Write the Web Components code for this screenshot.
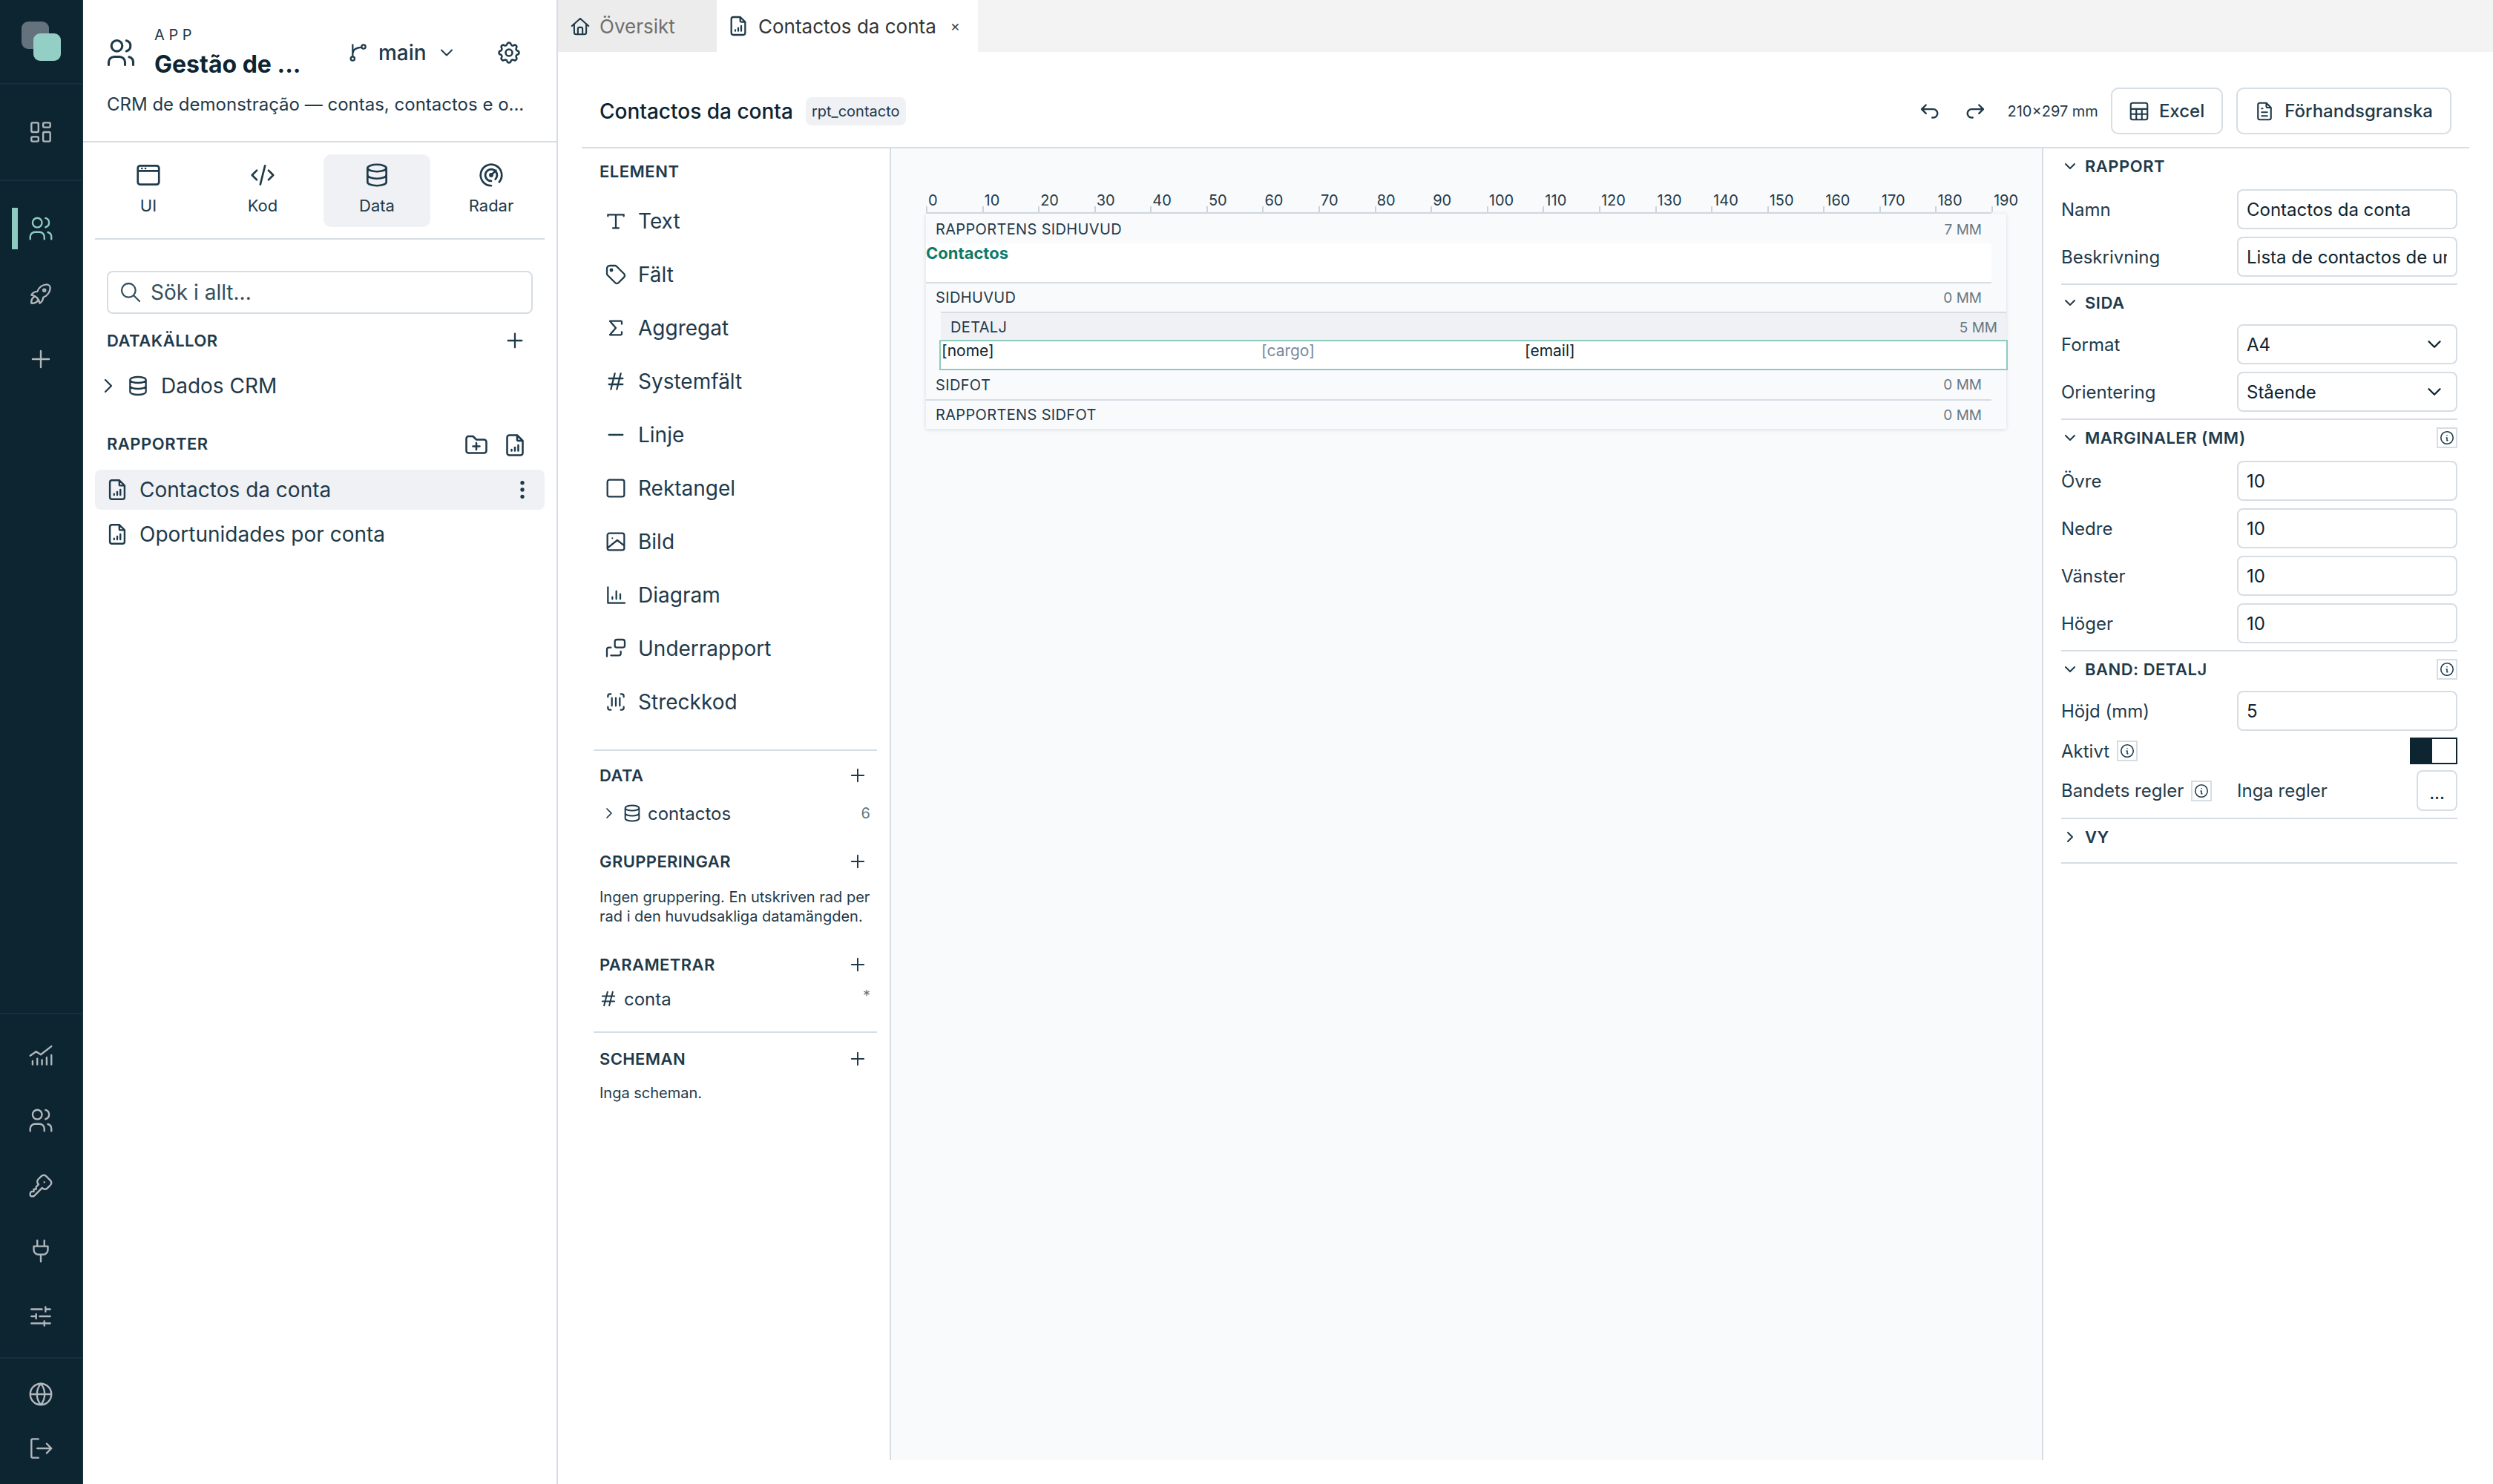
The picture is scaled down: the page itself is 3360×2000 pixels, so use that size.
<!DOCTYPE html>
<html lang="sv">
<head>
<meta charset="utf-8">
<title>Contactos da conta</title>
<style>
  html, body { margin: 0; height: 100%; background: #fff; }
  body { font-family: Inter, "Noto Sans", sans-serif; color: #1f3a4a; overflow: hidden; }
</style>
</head>
<body>
<app-shell>
  <app-rail slot="rail"></app-rail>
  <app-sidebar slot="sidebar"></app-sidebar>
  <report-tabs slot="tabs"></report-tabs>
  <report-toolbar slot="toolbar"></report-toolbar>
  <element-panel slot="elements"></element-panel>
  <report-canvas slot="canvas"></report-canvas>
  <props-panel slot="props"></props-panel>
</app-shell>

<script>
const ICONS = {
  dashboard: "M5 4h4a1 1 0 0 1 1 1v6a1 1 0 0 1-1 1H5a1 1 0 0 1-1-1V5a1 1 0 0 1 1-1M5 16h4a1 1 0 0 1 1 1v2a1 1 0 0 1-1 1H5a1 1 0 0 1-1-1v-2a1 1 0 0 1 1-1M15 12h4a1 1 0 0 1 1 1v6a1 1 0 0 1-1 1h-4a1 1 0 0 1-1-1v-6a1 1 0 0 1 1-1M15 4h4a1 1 0 0 1 1 1v2a1 1 0 0 1-1 1h-4a1 1 0 0 1-1-1V5a1 1 0 0 1 1-1",
  users: "M5 7a4 4 0 1 0 8 0a4 4 0 1 0-8 0M3 21v-2a4 4 0 0 1 4-4h4a4 4 0 0 1 4 4v2M16 3.13a4 4 0 0 1 0 7.75M21 21v-2a4 4 0 0 0-3-3.85",
  rocket: "M4 13a8 8 0 0 1 7 7a6 6 0 0 0 3-5a9 9 0 0 0 6-8a3 3 0 0 0-3-3a9 9 0 0 0-8 6a6 6 0 0 0-5 3M7 14a6 6 0 0 0-3 6a6 6 0 0 0 6-3M14 9a1 1 0 1 0 2 0a1 1 0 1 0-2 0",
  plus: "M12 5v14M5 12h14",
  chart: "M3 12.5l5-3.5 4 2.5 9-7M5 20v-3M9 20v-5M13 20v-4M17 20v-6M21 20v-8",
  key: "M16.555 3.843l3.602 3.602a2.877 2.877 0 0 1 0 4.069l-2.643 2.643a2.877 2.877 0 0 1-4.069 0l-.301-.301l-6.558 6.558a2 2 0 0 1-1.239.578l-.175.008h-1.172a1 1 0 0 1-.993-.883l-.007-.117v-1.172a2 2 0 0 1 .467-1.284l.119-.13l.414-.414h2v-2h2v-2l2.144-2.144l-.301-.301a2.877 2.877 0 0 1 0-4.069l2.643-2.643a2.877 2.877 0 0 1 4.069 0zM15 9h.01",
  plug: "M9 3v5M15 3v5M6 8h12v3a4 4 0 0 1-4 4h-4a4 4 0 0 1-4-4zM12 15v6",
  sliders: "M4 6h9M16 4v4M16 6h4M4 12h4M8 10v4M11 12h9M4 18h11M15 16v4M15 18h5",
  globe: "M3 12a9 9 0 1 0 18 0a9 9 0 0 0-18 0M3 12h18M12 3a14 14 0 0 1 0 18a14 14 0 0 1 0-18",
  logout: "M10 4H5a1 1 0 0 0-1 1v14a1 1 0 0 0 1 1h5M9 12h12M17 8l4 4-4 4",
  branch: "M5 18a2 2 0 1 0 4 0a2 2 0 1 0-4 0M16 6a2 2 0 1 0 4 0a2 2 0 1 0-4 0M7 16V4M16 6.5c-5 .5-9 2.5-9 6.5",
  gear: "M10.325 4.317c.426-1.756 2.924-1.756 3.35 0a1.724 1.724 0 0 0 2.573 1.066c1.543-.94 3.31.826 2.37 2.37a1.724 1.724 0 0 0 1.065 2.572c1.756.426 1.756 2.924 0 3.35a1.724 1.724 0 0 0-1.066 2.573c.94 1.543-.826 3.31-2.37 2.37a1.724 1.724 0 0 0-2.572 1.065c-.426 1.756-2.924 1.756-3.35 0a1.724 1.724 0 0 0-2.573-1.066c-1.543.94-3.31-.826-2.37-2.37a1.724 1.724 0 0 0-1.065-2.572c-1.756-.426-1.756-2.924 0-3.35a1.724 1.724 0 0 0 1.066-2.573c-.94-1.543.826-3.31 2.37-2.37c1 .608 2.296.07 2.572-1.065zM9 12a3 3 0 1 0 6 0a3 3 0 0 0-6 0",
  browser: "M3 6a2 2 0 0 1 2-2h14a2 2 0 0 1 2 2v12a2 2 0 0 1-2 2H5a2 2 0 0 1-2-2zM3 8.5h18M6.5 6.3h.01M9.5 6.3h.01",
  code: "M7 8l-4 4 4 4M17 8l4 4-4 4M14 4l-4 16",
  db: "M4 6a8 3 0 1 0 16 0a8 3 0 1 0-16 0M4 6v6a8 3 0 0 0 16 0V6M4 12v6a8 3 0 0 0 16 0v-6",
  radar: "M11 12a1 1 0 1 0 2 0a1 1 0 1 0-2 0M15.51 15.56a5 5 0 1 0-3.51 1.44M18.832 17.86a9 9 0 1 0-6.832 3.14M12 12l4-4",
  search: "M3 10a7 7 0 1 0 14 0a7 7 0 1 0-14 0M21 21l-6-6",
  right: "M9 6l6 6-6 6",
  down: "M6 9l6 6 6-6",
  folderplus: "M5 4h4l3 3h7a2 2 0 0 1 2 2v8a2 2 0 0 1-2 2H5a2 2 0 0 1-2-2V6a2 2 0 0 1 2-2M12 10v6M9 13h6",
  report: "M14 3v4a1 1 0 0 0 1 1h4M17 21H7a2 2 0 0 1-2-2V5a2 2 0 0 1 2-2h7l5 5v11a2 2 0 0 1-2 2zM9 17v-1M12 17v-3M15 17v-5",
  dots: "M11 5a1 1 0 1 0 2 0a1 1 0 1 0-2 0M11 12a1 1 0 1 0 2 0a1 1 0 1 0-2 0M11 19a1 1 0 1 0 2 0a1 1 0 1 0-2 0",
  home: "M3 12l9-8 9 8M5.5 10v9a2 2 0 0 0 2 2h9a2 2 0 0 0 2-2v-9M9.5 21v-6a1.5 1.5 0 0 1 1.5-1.5h2a1.5 1.5 0 0 1 1.5 1.5v6",
  undo: "M9 14l-4-4 4-4M5 10h11a4 4 0 1 1 0 8h-1",
  redo: "M15 14l4-4-4-4M19 10H8a4 4 0 1 0 0 8h1",
  table: "M3 5a2 2 0 0 1 2-2h14a2 2 0 0 1 2 2v14a2 2 0 0 1-2 2H5a2 2 0 0 1-2-2zM3 9.5h18M3 15h18M9 9.5V21M15 9.5V21",
  filetext: "M14 3v4a1 1 0 0 0 1 1h4M17 21H7a2 2 0 0 1-2-2V5a2 2 0 0 1 2-2h7l5 5v11a2 2 0 0 1-2 2zM9 9h1M9 13h6M9 17h6",
  info: "M3 12a9 9 0 1 0 18 0a9 9 0 0 0-18 0M12 8.5h.01M11 12h1v4h1",
  type: "M4 7V5.5h16V7M12 5.5V19M9 19h6",
  tag: "M6.5 7.5a1 1 0 1 0 2 0a1 1 0 1 0-2 0M3 6v5.172a2 2 0 0 0 .586 1.414l7.71 7.71a2.41 2.41 0 0 0 3.408 0l5.592-5.592a2.41 2.41 0 0 0 0-3.408l-7.71-7.71a2 2 0 0 0-1.414-.586H6a3 3 0 0 0-3 3z",
  sigma: "M18 16v2a1 1 0 0 1-1 1H6l6-7-6-7h11a1 1 0 0 1 1 1v2",
  hash: "M5 9h14M5 15h14M11 4L7 20M17 4l-4 16",
  minus: "M5 12h14",
  square: "M3.5 5.5a2 2 0 0 1 2-2h13a2 2 0 0 1 2 2v13a2 2 0 0 1-2 2h-13a2 2 0 0 1-2-2z",
  photo: "M3.5 5.5a2 2 0 0 1 2-2h13a2 2 0 0 1 2 2v13a2 2 0 0 1-2 2h-13a2 2 0 0 1-2-2zM8.5 8.5h.01M3.5 18.5l10-8 7 5.5",
  bars: "M4 4v16h17M8.5 16v-2M12.5 16V8M16.5 16v-5",
  subreport: "M11 5a2 2 0 0 1 2-2h6a2 2 0 0 1 2 2v4a2 2 0 0 1-2 2h-6a2 2 0 0 1-2-2zM3 20v-7a2 2 0 0 1 2-2h2M7 19h8a2 2 0 0 0 2-2v-2",
  barcode: "M4 7V6a2 2 0 0 1 2-2h1M4 17v1a2 2 0 0 0 2 2h1M17 4h1a2 2 0 0 1 2 2v1M17 20h1a2 2 0 0 0 2-2v-1M8 8v8M12 8v8M16 8v8"
};

// small base: every element renders its css + markup once into an open shadow root
class Base extends HTMLElement {
  connectedCallback() {
    if (this.shadowRoot) return;
    this.attachShadow({ mode: "open" }).innerHTML =
      `<style>*{box-sizing:border-box}${this.constructor.css}</style>${this.markup()}`;
  }
  attr(name, fallback = "") {
    return this.hasAttribute(name) ? this.getAttribute(name) : fallback;
  }
}

class UiIcon extends Base {
  static css = `:host{display:inline-flex;flex:none}svg{display:block;fill:none;stroke:currentColor;stroke-linecap:round;stroke-linejoin:round}`;
  markup() {
    const s = this.attr("size", "32");
    return `<svg width="${s}" height="${s}" viewBox="0 0 24 24" stroke-width="${this.attr("sw", "1.7")}"><path d="${ICONS[this.attr("name")]}"/></svg>`;
  }
}

class AppShell extends Base {
  static css = `
    :host{display:grid;width:3360px;height:2000px;grid-template-columns:112px 640px 449px 1553px 606px;grid-template-rows:70px 130px 1768px 32px}
    .rail{grid-column:1;grid-row:1/5;display:flex}
    .side{grid-column:2;grid-row:1/5;display:flex}
    .tabs{grid-column:3/6;grid-row:1;display:flex}
    .tool{grid-column:3/6;grid-row:2;display:flex}
    .el{grid-column:3;grid-row:3;display:flex}
    .cv{grid-column:4;grid-row:3;display:flex}
    .pr{grid-column:5;grid-row:3;display:flex}
    ::slotted(*){flex:1;min-width:0}
  `;
  markup() {
    return `<div class="rail"><slot name="rail"></slot></div><div class="side"><slot name="sidebar"></slot></div>
      <div class="tabs"><slot name="tabs"></slot></div><div class="tool"><slot name="toolbar"></slot></div>
      <div class="el"><slot name="elements"></slot></div><div class="cv"><slot name="canvas"></slot></div><div class="pr"><slot name="props"></slot></div>`;
  }
}

class RailButton extends Base {
  static css = `
    :host{display:flex;align-items:center;justify-content:center;height:var(--h,88px);position:relative;color:rgba(255,255,255,.68)}
    :host([active]){color:#8ecabf}
    :host([active])::before{content:"";position:absolute;left:16px;top:16px;width:8px;height:56px;background:#8ecabf}
  `;
  markup() { return `<ui-icon name="${this.attr("icon")}" size="38" sw="1.5"></ui-icon>`; }
}

class AppRail extends Base {
  static css = `
    :host{display:flex;flex-direction:column;background:#0d2431;border-right:2px solid #14303f;height:2000px}
    .logo{height:114px;border-bottom:2px solid #17303e;padding:29px 0 0 29px;flex:none}
    .logo div{position:relative;width:53px;height:54px}
    .logo i{position:absolute;width:37px;height:37px;border-radius:9px}
    .logo .a{left:0;top:0;background:#63727c}
    .logo .b{left:16px;top:16px;background:#94cfc5}
    .top{height:130px;border-bottom:2px solid #17303e;display:flex;align-items:center;justify-content:center;flex:none}
    .top rail-button{width:100%}
    .mid{padding-top:20px;flex:1}
    .low{border-top:2px solid #17303e;padding:11px 0;flex:none}
    .end{border-top:2px solid #17303e;padding:11px 0 12px;flex:none;--h:73px}
  `;
  markup() {
    return `<div class="logo"><div><i class="a"></i><i class="b"></i></div></div>
      <div class="top"><rail-button icon="dashboard"></rail-button></div>
      <div class="mid"><rail-button icon="users" active></rail-button><rail-button icon="rocket"></rail-button><rail-button icon="plus"></rail-button></div>
      <div class="low"><rail-button icon="chart"></rail-button><rail-button icon="users"></rail-button><rail-button icon="key"></rail-button><rail-button icon="plug"></rail-button><rail-button icon="sliders"></rail-button></div>
      <div class="end"><rail-button icon="globe"></rail-button><rail-button icon="logout"></rail-button></div>`;
  }
}

class SideTab extends Base {
  static css = `
    :host{display:flex;flex-direction:column;align-items:center;width:144px;height:98px;padding-top:9px;border-radius:10px;font-size:22px;color:#1f3a4a}
    :host([active]){background:#eff1f5}
    span{display:block;line-height:30px;margin-top:7px}
  `;
  markup() { return `<ui-icon name="${this.attr("icon")}" size="38" sw="1.7"></ui-icon><span><slot></slot></span>`; }
}

class TreeRow extends Base {
  static css = `
    :host{display:flex;align-items:center;height:54px;margin:0 16px;padding:0 14px 0 13px;gap:13px;border-radius:8px;font-size:28px;color:#1f3a4a}
    :host([selected]){background:#eff1f5}
    span{flex:1;white-space:nowrap}
  `;
  markup() { return `<ui-icon name="report" size="34"></ui-icon><span><slot></slot></span>${this.hasAttribute("selected") ? '<ui-icon name="dots" size="32" sw="2"></ui-icon>' : ""}`; }
}

class SideHead extends Base {
  static css = `
    :host{display:flex;align-items:center;height:44px;padding:0 38px 0 32px;font-size:22px;font-weight:600;letter-spacing:.5px;color:#1f3a4a}
    span{flex:1}
    div{display:flex;gap:16px;align-items:center}
    ::slotted(ui-icon[name="plus"]){margin-right:2px}
    ::slotted(ui-icon[name="folderplus"]),::slotted(ui-icon[name="report"]){margin-top:3px}
  `;
  markup() { return `<span><slot></slot></span><div><slot name="actions"></slot></div>`; }
}

class AppSidebar extends Base {
  static css = `
    :host{display:block;border-right:2px solid #d6dde4;height:2000px}
    .head{height:192px;border-bottom:2px solid #d6dde4;padding:35px 46px 0 29px}
    .row{display:flex;align-items:center;height:72px}
    .names{margin-left:23px;width:258px}
    .app{font-size:20px;letter-spacing:5.6px;line-height:24px;color:#1f3a4a}
    .name{font-size:32px;font-weight:700;line-height:40px;margin-top:8px;color:#0d2431;white-space:nowrap}
    .branch{display:flex;align-items:center;font-size:28px;font-weight:500}
    .branch b{font-weight:500;margin:0 13px 0 12px}
    .gear{margin-left:auto}
    .desc{font-size:24px;line-height:34px;margin:17px 0 0 3px;white-space:nowrap}
    .tabs{display:flex;gap:10px;margin:16px 16px 0;padding-bottom:15px;border-bottom:2px solid #d6dde4;height:115px}
    .search{display:flex;align-items:center;height:58px;margin:42px 0 14px 32px;width:574px;border:2px solid #d6dde4;border-radius:8px;padding-left:14px;gap:11px;font-size:28px;color:#33505f}
    .src{display:flex;align-items:center;height:52px;margin-top:13px;padding-left:18px;gap:8px;font-size:28px}
    .src span{margin-left:7px}
    .gap{height:30px}
    .rows{margin-top:13px;display:flex;flex-direction:column;gap:6px}
  `;
  markup() {
    return `<div class="head">
        <div class="row">
          <ui-icon name="users" size="44"></ui-icon>
          <div class="names"><div class="app">APP</div><div class="name">Gestão de ...</div></div>
          <div class="branch"><ui-icon name="branch" size="32"></ui-icon><b>main</b><ui-icon name="down" size="28"></ui-icon></div>
          <ui-icon class="gear" name="gear" size="36"></ui-icon>
        </div>
        <div class="desc">CRM de demonstração — contas, contactos e o...</div>
      </div>
      <div class="tabs">
        <side-tab icon="browser">UI</side-tab><side-tab icon="code">Kod</side-tab><side-tab icon="db" active>Data</side-tab><side-tab icon="radar">Radar</side-tab>
      </div>
      <div class="search"><ui-icon name="search" size="32"></ui-icon>Sök i allt...</div>
      <side-head>DATAKÄLLOR<ui-icon slot="actions" name="plus" size="32"></ui-icon></side-head>
      <div class="src"><ui-icon name="right" size="32"></ui-icon><ui-icon name="db" size="32"></ui-icon><span>Dados CRM</span></div>
      <div class="gap"></div>
      <side-head>RAPPORTER<ui-icon slot="actions" name="folderplus" size="36"></ui-icon><ui-icon slot="actions" name="report" size="36"></ui-icon></side-head>
      <div class="rows"><tree-row selected>Contactos da conta</tree-row><tree-row>Oportunidades por conta</tree-row></div>`;
  }
}

class ReportTabs extends Base {
  static css = `
    :host{display:flex;background:#f3f3f3;height:70px;font-size:26px}
    .t{display:flex;align-items:center;height:70px;white-space:nowrap}
    .a{width:214px;background:#ececec;color:#6f6f6f;padding-left:15px;gap:11px}
    .a ui-icon,.b ui-icon{color:#1f3a4a}
    .b{width:352px;background:#fff;color:#333;padding-left:13px;gap:11px}
    .x{font-size:20px;margin-left:8px;color:#444}
  `;
  markup() {
    return `<div class="t a"><ui-icon name="home" size="30"></ui-icon>Översikt</div>
      <div class="t b"><ui-icon name="report" size="32"></ui-icon>Contactos da conta<span class="x">×</span></div>`;
  }
}

class ToolButton extends Base {
  static css = `
    :host{display:flex;align-items:center;height:63px;border:2px solid #d6dde4;border-radius:10px;background:#fff;padding:0 23px 0 21px;gap:12px;font-size:24px;font-weight:500;color:#1f3a4a;white-space:nowrap}
  `;
  markup() { return `<ui-icon name="${this.attr("icon")}" size="30"></ui-icon><slot></slot>`; }
}

class ReportToolbar extends Base {
  static css = `
    :host{display:block;height:130px;padding:0 32px}
    .bar{display:flex;align-items:center;height:130px;padding:48px 24px 17px 24px;border-bottom:2px solid #d6dde4}
    h1{margin:0;font-size:28px;font-weight:500;color:#0d2431;white-space:nowrap}
    .chip{margin-left:17px;height:38px;line-height:38px;padding:0 8px;background:#eff1f5;border-radius:8px;font-size:20px}
    .right{margin-left:auto;display:flex;align-items:center}
    .size{font-size:20px;margin:0 17px 0 26px;white-space:nowrap}
    .redo{margin-left:29px}
    tool-button + tool-button{margin-left:18px}
  `;
  markup() {
    return `<div class="bar"><h1>Contactos da conta</h1><span class="chip">rpt_contacto</span>
      <div class="right"><ui-icon name="undo" size="34"></ui-icon><ui-icon class="redo" name="redo" size="34"></ui-icon><span class="size">210×297 mm</span>
      <tool-button icon="table">Excel</tool-button><tool-button icon="filetext">Förhandsgranska</tool-button></div></div>`;
  }
}

class ElementItem extends Base {
  static css = `
    :host{display:flex;align-items:center;height:72px;padding-left:14px;gap:14px;font-size:28px;white-space:nowrap;color:#1f3a4a}
  `;
  markup() { return `<ui-icon name="${this.attr("icon")}" size="32"></ui-icon><slot></slot>`; }
}

class PanelHead extends Base {
  static css = `
    :host{display:flex;align-items:center;height:44px;padding-left:8px;padding-right:12px;font-size:22px;font-weight:600;letter-spacing:.4px;color:#1f3a4a}
    span{flex:1}
  `;
  markup() { return `<span><slot></slot></span><ui-icon name="plus" size="28"></ui-icon>`; }
}

class ElementPanel extends Base {
  static css = `
    :host{display:block;border-right:2px solid #d6dde4;padding:0 17px 0 48px}
    .title{height:62px;line-height:62px;padding-left:8px;font-size:22px;font-weight:600;letter-spacing:.5px}
    .sep{height:2px;background:#d6dde4}
    .row{display:flex;align-items:center;padding-left:9px;font-size:24px;color:#1f3a4a}
    .n{margin-left:auto;padding-right:9px;font-size:20px;color:#667884}
    .txt{padding-left:8px;font-size:20px;line-height:26px}
  `;
  markup() {
    const items = [["type","Text"],["tag","Fält"],["sigma","Aggregat"],["hash","Systemfält"],["minus","Linje"],["square","Rektangel"],["photo","Bild"],["bars","Diagram"],["subreport","Underrapport"],["barcode","Streckkod"]];
    return `<div class="title">ELEMENT</div>
      ${items.map(([i, t]) => `<element-item icon="${i}">${t}</element-item>`).join("")}
      <div class="sep" style="margin-top:28px"></div>
      <panel-head style="margin-top:11px">DATA</panel-head>
      <div class="row" style="height:58px"><ui-icon name="right" size="24" style="margin-right:5px"></ui-icon><ui-icon name="db" size="28" style="margin-right:7px"></ui-icon>contactos<span class="n">6</span></div>
      <panel-head style="margin-top:14px">GRUPPERINGAR</panel-head>
      <div class="txt" style="margin-top:13px">Ingen gruppering. En utskriven rad per<br>rad i den huvudsakliga datamängden.</div>
      <panel-head style="margin-top:30px">PARAMETRAR</panel-head>
      <div class="row" style="height:48px"><ui-icon name="hash" size="28" style="margin-right:7px;margin-left:-3px"></ui-icon>conta<span class="n" style="margin-top:-8px">*</span></div>
      <div class="sep" style="margin-top:20px"></div>
      <panel-head style="margin-top:13px">SCHEMAN</panel-head>
      <div class="txt" style="margin-top:11px">Inga scheman.</div>`;
  }
}

class ReportBand extends Base {
  static css = `
    :host{display:flex;align-items:center;justify-content:space-between;height:38px;font-size:20px;letter-spacing:.35px;padding:0 var(--pr,13px) 0 13px;white-space:nowrap}
    span:last-child{color:#667884;letter-spacing:0;font-size:19px}
  `;
  markup() { return `<span><slot></slot></span><span>${this.attr("mm")} MM</span>`; }
}

class ReportCanvas extends Base {
  static css = `
    :host{display:block;background:#f9fafc;border-right:2px solid #d6dde4;padding:58px 0 0 47px}
    .ruler{display:flex;width:1436px;height:32px;border-bottom:4px solid #d6dde4}
    .ruler span{flex:0 0 75.58px;height:28px;padding-left:3px;font-size:20px;line-height:24px;color:#1f3a4a;
      background:linear-gradient(#ccd4dc,#ccd4dc) left bottom/2px 8px no-repeat;white-space:nowrap}
    .page{width:1456px;margin-top:-2px;padding-top:2px;box-shadow:0 1px 5px rgba(13,36,49,.14);background:#f9fafc;color:#1f3a4a}
    .narrow{width:1436px}
    .white{background:#fff;height:54px;border-bottom:2px solid #d6dde4;font-size:22px;font-weight:700;color:#0f7a68;line-height:26px}
    .line{border-bottom:2px solid #d6dde4}
    .det{margin-left:20px;background:#eff1f5;border-top:2px solid #d6dde4;--pr:12px}
    .det report-band{height:36px;padding-top:2px}
    .sel{display:flex;height:41px;margin:0 -2px 0 18px;background:#fff;border:2px solid #8ecabf;font-size:21px;color:#0d2431;line-height:26px;padding-left:1px}
    .sel .n{width:431px}
    .sel .c{width:355px;color:#7a8699}
  `;
  markup() {
    let ticks = "";
    for (let i = 0; i <= 190; i += 10) ticks += `<span>${i}</span>`;
    return `<div class="ruler">${ticks}</div>
      <div class="page">
        <report-band class="narrow" mm="7">RAPPORTENS SIDHUVUD</report-band>
        <div class="white narrow">Contactos</div>
        <report-band class="narrow" mm="0">SIDHUVUD</report-band>
        <div class="det"><report-band mm="5">DETALJ</report-band></div>
        <div class="sel"><span class="n">[nome]</span><span class="c">[cargo]</span><span>[email]</span></div>
        <report-band class="narrow line" mm="0" style="height:41px">SIDFOT</report-band>
        <report-band class="narrow" mm="0">RAPPORTENS SIDFOT</report-band>
      </div>`;
  }
}

class PropHead extends Base {
  static css = `
    :host{display:flex;align-items:center;height:48px;font-size:22px;font-weight:600;letter-spacing:.5px;color:#1f3a4a;white-space:nowrap}
    .t{flex:1;margin-left:8px}
    .i{display:flex;align-items:center;justify-content:center;width:28px;height:28px;border:2px solid #d6dde4}
  `;
  markup() {
    return `<ui-icon name="${this.hasAttribute("closed") ? "right" : "down"}" size="24" sw="2"></ui-icon><span class="t"><slot></slot></span>${this.hasAttribute("info") ? '<span class="i"><ui-icon name="info" size="22"></ui-icon></span>' : ""}`;
  }
}

class PropRow extends Base {
  static css = `
    :host{display:flex;align-items:center;min-height:54px;font-size:24px;color:#1f3a4a;white-space:nowrap}
    .l{display:flex;align-items:center;gap:10px;width:237px;flex:none}
    .i{display:flex;align-items:center;justify-content:center;width:28px;height:28px;border:2px solid #d6dde4}
    .v{flex:1;min-width:0;display:flex;align-items:center;justify-content:space-between}
  `;
  markup() {
    return `<div class="l">${this.attr("label")}${this.hasAttribute("info") ? '<span class="i"><ui-icon name="info" size="22"></ui-icon></span>' : ""}</div><div class="v"><slot></slot></div>`;
  }
}

class PropField extends Base {
  static css = `
    :host{display:flex;flex:1;min-width:0;align-items:center;height:54px;border:2px solid #d6dde4;border-radius:8px;background:#fff;padding:0 12px 0 11px;font-size:24px;color:#0d2431;overflow:hidden}
    .c{flex:1;overflow:hidden;white-space:nowrap}
  `;
  markup() { return `<div class="c"><slot></slot></div>${this.hasAttribute("select") ? '<ui-icon name="down" size="30" sw="1.9" style="margin-right:2px"></ui-icon>' : ""}`; }
}

class PropsPanel extends Base {
  static css = `
    :host{display:block;padding:0 48px 0 24px}
    .fields{display:flex;flex-direction:column;gap:10px;padding-bottom:9px;border-bottom:2px solid #d6dde4}
    .toggle{display:block;margin-left:auto;width:64px;height:36px;border:2px solid #0d2431;background:linear-gradient(90deg,#0d2431 28px,#fff 28px)}
    .more{width:55px;height:55px;border:2px solid #d6dde4;border-radius:8px;text-align:center;font-size:24px;line-height:58px;color:#0d2431}
    .tight{gap:8px}
  `;
  markup() {
    const margins = ["Övre", "Nedre", "Vänster", "Höger"].map(l => `<prop-row label="${l}"><prop-field>10</prop-field></prop-row>`).join("");
    return `<prop-head style="margin-bottom:7px">RAPPORT</prop-head>
      <div class="fields"><prop-row label="Namn"><prop-field>Contactos da conta</prop-field></prop-row><prop-row label="Beskrivning"><prop-field>Lista de contactos de uma conta</prop-field></prop-row></div>
      <prop-head style="margin-bottom:5px">SIDA</prop-head>
      <div class="fields"><prop-row label="Format"><prop-field select>A4</prop-field></prop-row><prop-row label="Orientering"><prop-field select>Stående</prop-field></prop-row></div>
      <prop-head info style="margin-bottom:7px">MARGINALER (MM)</prop-head>
      <div class="fields">${margins}</div>
      <prop-head info style="margin-bottom:5px">BAND: DETALJ</prop-head>
      <div class="fields tight">
        <prop-row label="Höjd (mm)" style="margin-bottom:1px"><prop-field>5</prop-field></prop-row>
        <prop-row label="Aktivt" info style="min-height:36px"><span class="toggle"></span></prop-row>
        <prop-row label="Bandets regler" info>Inga regler<span class="more">...</span></prop-row>
      </div>
      <prop-head closed>VY</prop-head>
      <div style="height:2px;background:#d6dde4;margin-top:10px"></div>`;
  }
}

customElements.define("ui-icon", UiIcon);
customElements.define("rail-button", RailButton);
customElements.define("app-rail", AppRail);
customElements.define("side-tab", SideTab);
customElements.define("tree-row", TreeRow);
customElements.define("side-head", SideHead);
customElements.define("app-sidebar", AppSidebar);
customElements.define("report-tabs", ReportTabs);
customElements.define("tool-button", ToolButton);
customElements.define("report-toolbar", ReportToolbar);
customElements.define("element-item", ElementItem);
customElements.define("panel-head", PanelHead);
customElements.define("element-panel", ElementPanel);
customElements.define("report-band", ReportBand);
customElements.define("report-canvas", ReportCanvas);
customElements.define("prop-head", PropHead);
customElements.define("prop-row", PropRow);
customElements.define("prop-field", PropField);
customElements.define("props-panel", PropsPanel);
customElements.define("app-shell", AppShell);
</script>
</body>
</html>
